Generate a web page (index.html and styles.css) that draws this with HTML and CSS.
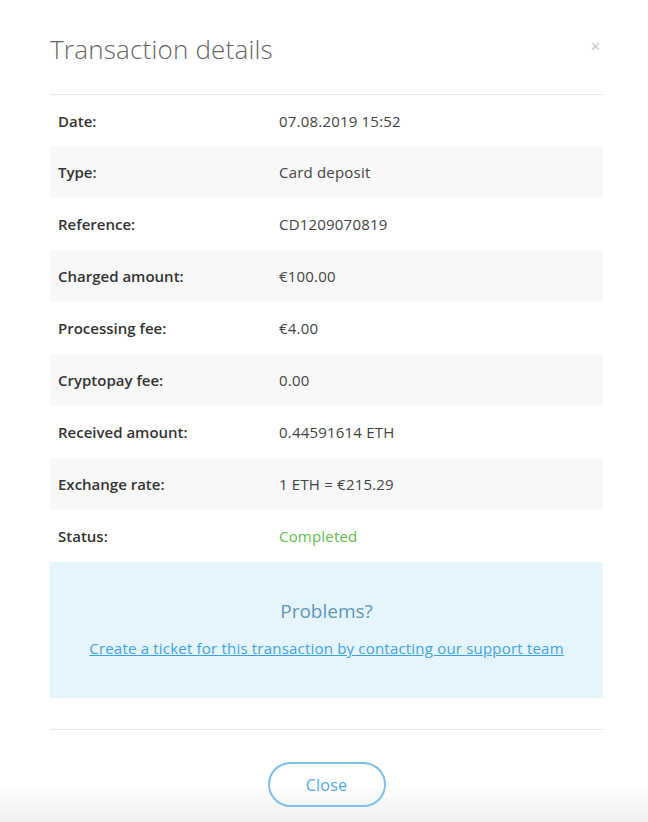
FILE: index.html
```html
<!DOCTYPE html>
<html>
<head>
<meta charset="utf-8">
<link rel="stylesheet" href="styles.css">
</head>
<body>
<div class="modal">
  <div class="modal-header">
    <h1 class="title">Transaction details</h1>
    <span class="close-x">&#x2715;</span>
  </div>
  <div class="details">
    <div class="row"><div class="label">Date:</div><div class="value">07.08.2019 15:52</div></div>
    <div class="row alt"><div class="label">Type:</div><div class="value">Card deposit</div></div>
    <div class="row"><div class="label">Reference:</div><div class="value">CD1209070819</div></div>
    <div class="row alt"><div class="label">Charged amount:</div><div class="value">€100.00</div></div>
    <div class="row"><div class="label">Processing fee:</div><div class="value">€4.00</div></div>
    <div class="row alt"><div class="label">Cryptopay fee:</div><div class="value">0.00</div></div>
    <div class="row"><div class="label">Received amount:</div><div class="value">0.44591614 ETH</div></div>
    <div class="row alt"><div class="label">Exchange rate:</div><div class="value">1 ETH = €215.29</div></div>
    <div class="row"><div class="label">Status:</div><div class="value status">Completed</div></div>
  </div>
  <div class="problems">
    <div class="problems-title">Problems?</div>
    <a class="problems-link" href="#">Create a ticket for this transaction by contacting our support team</a>
  </div>
  <div class="modal-footer">
    <button class="btn-close">Close</button>
  </div>
</div>
</body>
</html>
```
FILE: styles.css
```css
html, body {
  margin: 0;
  padding: 0;
  height: 100%;
}
body {
  font-family: "Open Sans", Lato, sans-serif;
  background: linear-gradient(to bottom, #ffffff 0, #ffffff 785px, #efefef 822px);
  color: #333;
}
.modal {
  width: 553px;
  margin: 0 auto 0 50px;
}
.modal-header {
  display: flex;
  justify-content: space-between;
  align-items: center;
  height: 95px;
  border-bottom: 1px solid #e8e8e8;
  box-sizing: border-box;
}
.title {
  margin: 0;
  font-size: 26px;
  font-weight: 300;
  letter-spacing: 0.2px;
  color: #666;
  padding-top: 3px;
}
.close-x {
  color: #c8c8c8;
  font-size: 13px;
  margin-right: 2px;
  padding-bottom: 2px;
}
.details {
  display: flex;
  flex-direction: column;
}
.row {
  display: flex;
  align-items: center;
  height: 52px;
  font-size: 15px;
  letter-spacing: 0.2px;
}
.row:first-child {
  height: 51px;
}
.row.alt {
  background: #f8f8f8;
}
.label {
  width: 221px;
  padding-left: 8px;
  font-weight: 600;
  letter-spacing: 0;
  color: #333;
}
.value {
  color: #444;
}
.status {
  color: #5cbf4a;
}
.problems {
  background: #e6f4fc;
  height: 136px;
  box-sizing: border-box;
  padding-bottom: 4px;
  display: flex;
  flex-direction: column;
  align-items: center;
  justify-content: center;
  gap: 14px;
}
.problems-title {
  font-size: 19px;
  color: #5f97b8;
}
.problems-link {
  font-size: 15px;
  letter-spacing: 0.2px;
  color: #3ba3e4;
  text-decoration: underline;
}
.modal-footer {
  margin-top: 31px;
  border-top: 1px solid #e8e8e8;
  display: flex;
  justify-content: center;
  padding-top: 32px;
}
.btn-close {
  width: 118px;
  height: 45px;
  border: 2px solid #7cbfec;
  border-radius: 23px;
  background: transparent;
  color: #4ea9e6;
  font-family: inherit;
  font-size: 16px;
  letter-spacing: 0.2px;
}
```
